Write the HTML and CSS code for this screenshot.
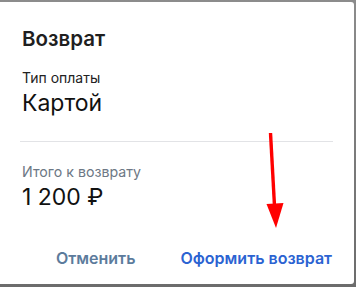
FILE: index.html
```html
<!DOCTYPE html>
<html lang="ru">
<head>
<meta charset="utf-8">
<link rel="stylesheet" href="styles.css">
</head>
<body>
<div class="backdrop">
  <div class="dialog">
    <h2 class="title">Возврат</h2>
    <div class="field">
      <div class="label">Тип оплаты</div>
      <div class="value">Картой</div>
    </div>
    <div class="sep"></div>
    <div class="field total">
      <div class="label muted">Итого к возврату</div>
      <div class="value">1 200 ₽</div>
    </div>
    <div class="actions">
      <button class="btn btn-cancel">Отменить</button>
      <button class="btn btn-primary">Оформить возврат</button>
    </div>
    <svg class="arrow" width="356" height="287" viewBox="0 0 356 287">
      <line x1="270.5" y1="133" x2="274.5" y2="206" stroke="#ff0000" stroke-width="3.4"/>
      <polygon points="266.5,204 283.5,203 276,228" fill="#ff0000"/>
    </svg>
  </div>
</div>
</body>
</html>
```

FILE: styles.css
```css
html, body {
  margin: 0;
  padding: 0;
}
body {
  width: 356px;
  height: 287px;
  overflow: hidden;
  background: linear-gradient(#8c8c8c, #6c6c6c);
  font-family: Inter, Roboto, "Liberation Sans", sans-serif;
}
.backdrop {
  padding-top: 2px;
  height: 285px;
  box-sizing: border-box;
}
.dialog {
  position: relative;
  width: 354px;
  height: 282px;
  background: #ffffff;
  border-radius: 0 3px 3px 0;
  box-sizing: border-box;
  padding: 0 22px;
  display: flex;
  flex-direction: column;
}
.title {
  margin: 24px 0 0;
  font-size: 20.5px;
  line-height: 25px;
  font-weight: 600;
  color: #1f1f1f;
}
.field {
  display: flex;
  flex-direction: column;
}
.field:first-of-type {
  margin-top: 18px;
}
.label {
  font-size: 14px;
  line-height: 17px;
  color: #222222;
}
.label.muted {
  font-size: 14.2px;
  color: #6d7885;
}
.value {
  font-size: 23px;
  line-height: 28px;
  color: #111111;
  margin-top: 3px;
}
.sep {
  height: 1px;
  background: #e2e3e6;
  margin: 24px -1px 0 -2px;
}
.total {
  margin-top: 21px;
}
.actions {
  margin-top: auto;
  margin-bottom: 16px;
  display: flex;
  justify-content: flex-end;
  gap: 45px;
  margin-right: 0;
}
.btn {
  border: none;
  background: none;
  padding: 0;
  font-family: inherit;
  font-size: 16px;
  line-height: 20px;
  font-weight: 600;
}
.btn-cancel {
  color: #5c7b9c;
}
.btn-primary {
  color: #2b63d2;
}
.arrow {
  position: absolute;
  left: 0;
  top: -2px;
  pointer-events: none;
}
```
